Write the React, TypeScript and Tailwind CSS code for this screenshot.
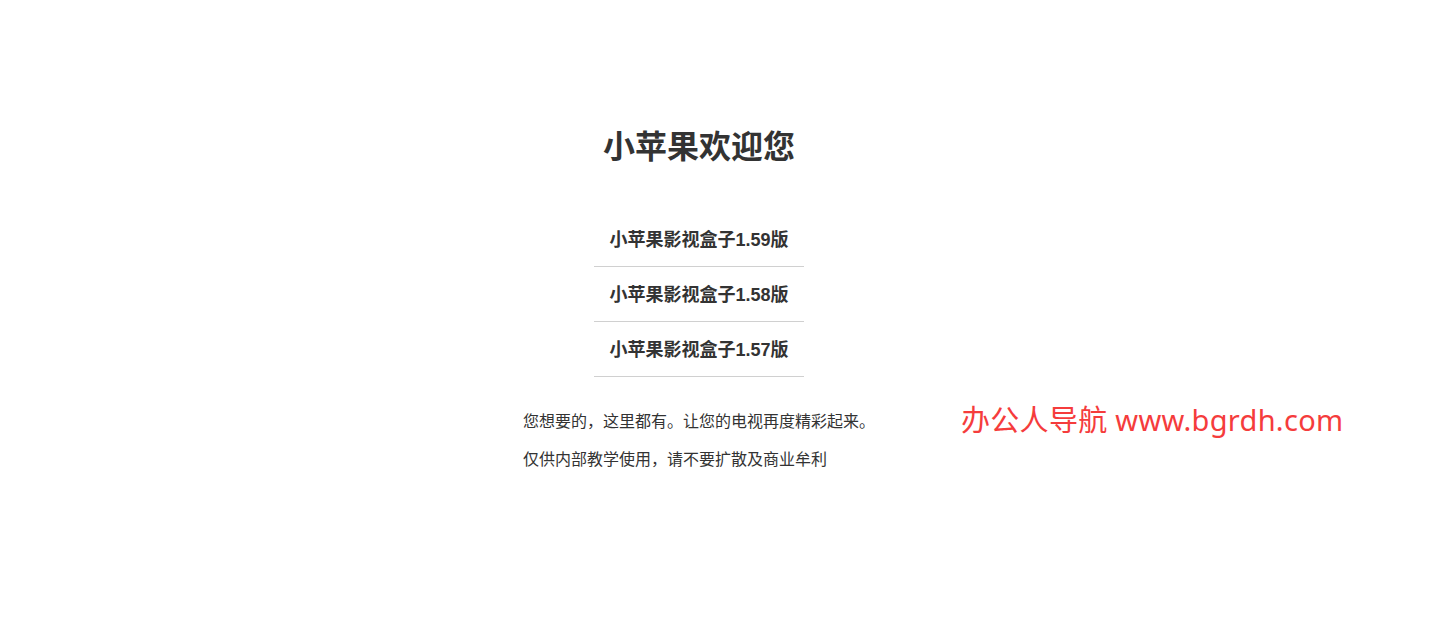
const versions = ["小苹果影视盒子1.59版", "小苹果影视盒子1.58版", "小苹果影视盒子1.57版"];

export default function App() {
  return (
    <div
      className="relative min-h-[625px] w-full bg-white text-[#333333]"
      style={{ fontFamily: '"Liberation Sans", "Noto Sans CJK SC", sans-serif' }}
    >
      <div className="flex w-[1398px] flex-col items-center pt-[125px]">
        <h1 className="text-[32px] font-bold leading-[44px]">小苹果欢迎您</h1>

        <ul className="mt-[43px] w-[210px]">
          {versions.map((v) => (
            <li key={v} className="flex h-[55px] items-center justify-center pt-[3px] border-b border-[#d0d0d0] text-[18px] font-bold">
              {v}
            </li>
          ))}
        </ul>

        <div className="mt-[34px] w-[352px] text-[16px] leading-[22px]">
          <p>您想要的，这里都有。让您的电视再度精彩起来。</p>
          <p className="mt-[16px]">仅供内部教学使用，请不要扩散及商业牟利</p>
        </div>
      </div>

      <div
        className="absolute left-[961px] top-[400px] text-[29px] leading-[40px] tracking-[0.3px] text-[#f53c3c]"
        style={{ fontFamily: '"Noto Sans", "Noto Sans CJK SC", sans-serif' }}
      >
        办公人导航 www.bgrdh.com
      </div>
    </div>
  );
}
